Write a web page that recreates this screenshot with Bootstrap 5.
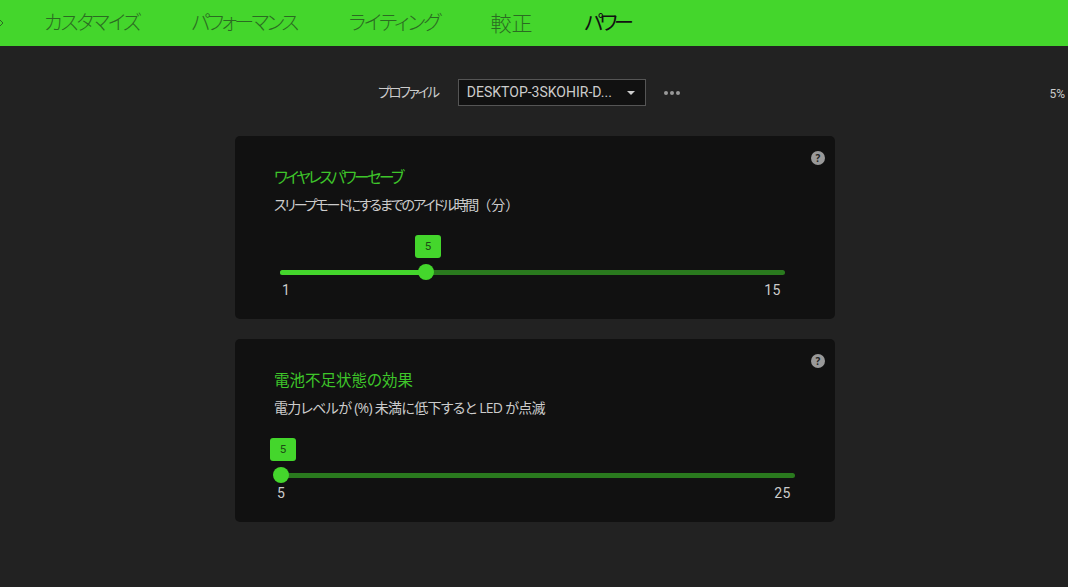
<!DOCTYPE html>
<html lang="ja">
<head>
    <meta charset="UTF-8">
    <meta name="viewport" content="width=device-width, initial-scale=1.0">
    <title>パワー</title>
    <link href="https://cdn.jsdelivr.net/npm/bootstrap@5.3.0/dist/css/bootstrap.min.css" rel="stylesheet">
    <style>
        html, body { height: 100%; }
        body { background: #222; color: #ccc; overflow: hidden; font-family: "Open Sans", "Noto Sans CJK JP", sans-serif; font-feature-settings: "palt"; }
        .top-tabs { height: 46px; background: #44d62c; padding-left: 44px; gap: 51px; position: relative; }
        .top-tab { font-size: 20px; line-height: 46px; color: #2b6b22; font-weight: 300; padding: 0; border: 0; letter-spacing: -2px; }
        .top-tab:nth-of-type(1) { margin-right: 1px; }
        .top-tab:nth-of-type(2) { letter-spacing: -2.7px; margin-right: 1px; }
        .top-tab:nth-of-type(4) { font-size: 21px; letter-spacing: 0; margin-right: 1px; }
        .top-tab.active { color: #111; font-weight: 400; letter-spacing: -3.4px; }
        .back-chevron { position: absolute; left: -5px; top: 17px; }
        .profile-row { height: 90px; padding: 33px 10px 0 0; position: relative; }
        .profile-label { font-size: 13.5px; letter-spacing: -2.1px; color: #ccc; margin-right: 20px; line-height: 26px; }
        .profile-select { width: 188px; height: 27px; background: #111; border: 1px solid #555; color: #ccc; font-size: 14px; line-height: 25px; padding: 0 8px; font-family: "Roboto", sans-serif; }
        .select-caret { width: 0; height: 0; border-left: 4px solid transparent; border-right: 4px solid transparent; border-top: 4px solid #ccc; margin-right: 2px; }
        .more-dots { margin-left: 18px; gap: 2px; height: 27px; }
        .more-dots span { width: 4px; height: 4px; border-radius: 50%; background: #999; }
        .battery-pct { position: absolute; right: 3px; top: 39px; font-size: 12px; color: #ccc; font-family: "Roboto", sans-serif; }
        .power-card { width: 600px; height: 183px; background: #111; border-radius: 5px; padding: 30px 39px 0; position: relative; margin: 0 0 20px 235px; }
        .power-title { font-size: 15.5px; line-height: 22px; color: #3ec52a; font-weight: 400; margin: 0 0 6px; }
        .title-kana { letter-spacing: -2.5px; }
        .power-desc { font-size: 14px; line-height: 21px; color: #ccc; margin: 0; }
        .desc-kana { letter-spacing: -2.1px; }
        .desc-mixed { letter-spacing: -.7px; }
        .paren-wide { font-feature-settings: normal; letter-spacing: 0; }
        .help-dot { position: absolute; top: 15px; right: 10px; width: 14px; height: 14px; border-radius: 50%; background: #999; color: #222; font-size: 10px; line-height: 14px; text-align: center; font-weight: 700; }
        .slider-box { position: relative; margin-top: 55px; height: 5px; background: #2a7a1e; border-radius: 3px; }
        .slider-fill { position: absolute; left: 0; top: 0; height: 100%; background: #44d62c; border-radius: 3px; }
        .slider-thumb { position: absolute; top: -6px; width: 16px; height: 16px; margin-left: -8px; border-radius: 50%; background: #44d62c; }
        .slider-bubble { position: absolute; top: -35px; width: 26px; height: 23px; margin-left: -11px; border-radius: 3px; background: #44d62c; color: #1c4a15; font-size: 11.5px; line-height: 23px; text-align: center; font-family: "Roboto", sans-serif; }
        .slider-ends { position: absolute; top: 11px; left: 0; right: 0; font-size: 14px; line-height: 18px; color: #ccc; letter-spacing: .5px; font-family: "Roboto", sans-serif; }
        .wide-one { width: 505px; margin-left: 6px; }
        .wide-two { width: 514px; margin-left: 7px; }
        .wide-one .slider-ends { padding: 0 4px 0 2px; }
        .wide-two .slider-ends { left: -4px; padding-right: 4px; }
    </style>
</head>
<body>
    <!-- Tabs -->
    <nav class="top-tabs d-flex align-items-start">
        <svg class="back-chevron" width="10" height="12" viewBox="0 0 10 12"><path d="M3 1l5 5-5 5" fill="none" stroke="#2b6b22" stroke-width="1"/></svg>
        <a class="top-tab text-decoration-none">カスタマイズ</a>
        <a class="top-tab text-decoration-none">パフォーマンス</a>
        <a class="top-tab text-decoration-none">ライティング</a>
        <a class="top-tab text-decoration-none">較正</a>
        <a class="top-tab active text-decoration-none">パワー</a>
    </nav>

    <!-- Profile -->
    <div class="profile-row d-flex justify-content-center align-items-start">
        <span class="profile-label">プロファイル</span>
        <div class="profile-select d-flex align-items-center justify-content-between">
            <span>DESKTOP-3SKOHIR-D...</span>
            <span class="select-caret"></span>
        </div>
        <div class="more-dots d-flex align-items-center">
            <span></span><span></span><span></span>
        </div>
        <span class="battery-pct">5%</span>
    </div>

    <div class="power-card">
        <span class="help-dot">?</span>
        <h5 class="power-title title-kana">ワイヤレスパワーセーブ</h5>
        <p class="power-desc desc-kana">スリープモードにするまでのアイドル時間<span class="paren-wide">（分）</span></p>
        <div class="slider-box wide-one">
            <div class="slider-fill" style="width:146px"></div>
            <div class="slider-bubble" style="left:146px">5</div>
            <div class="slider-thumb" style="left:146px"></div>
            <div class="slider-ends d-flex justify-content-between"><span>1</span><span>15</span></div>
        </div>
    </div>

    <div class="power-card">
        <span class="help-dot">?</span>
        <h5 class="power-title">電池不足状態の効果</h5>
        <p class="power-desc desc-mixed">電力レベルが (%) 未満に低下すると LED が点滅</p>
        <div class="slider-box wide-two">
            <div class="slider-bubble" style="left:0px">5</div>
            <div class="slider-thumb" style="left:0px"></div>
            <div class="slider-ends d-flex justify-content-between"><span>5</span><span>25</span></div>
        </div>
    </div>

    <script src="https://cdn.jsdelivr.net/npm/bootstrap@5.3.0/dist/js/bootstrap.bundle.min.js"></script>
</body>
</html>
